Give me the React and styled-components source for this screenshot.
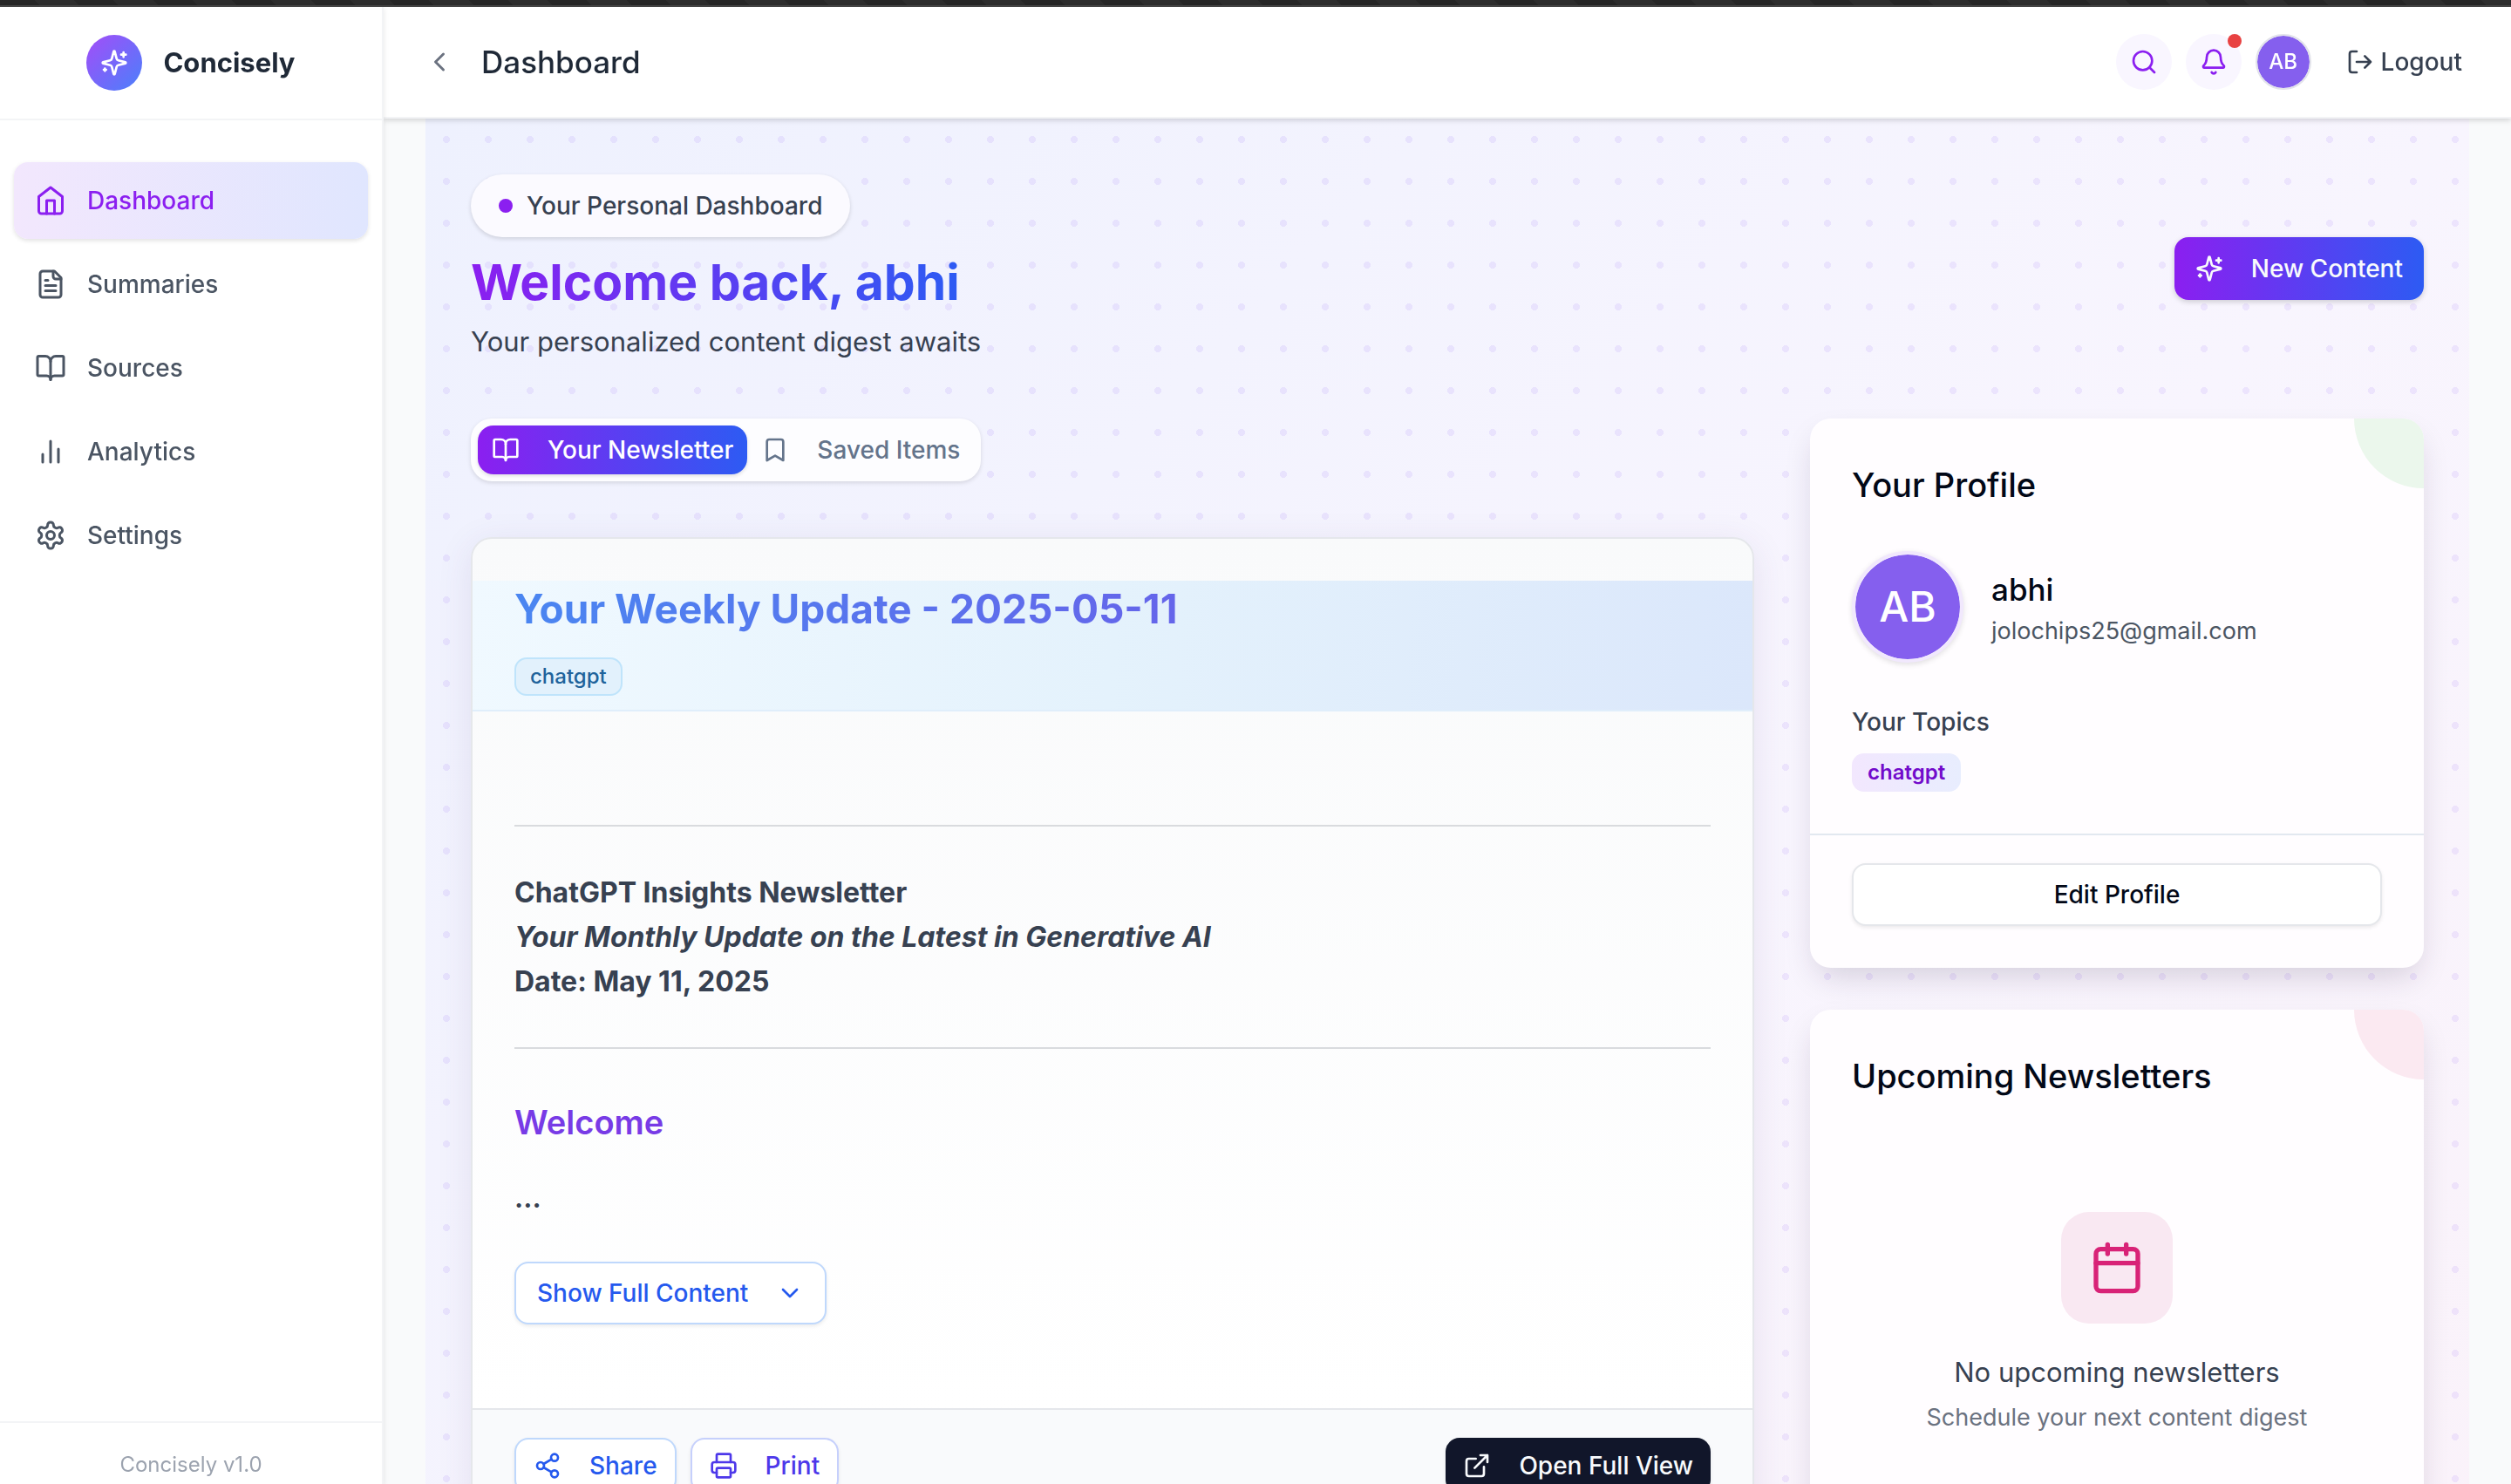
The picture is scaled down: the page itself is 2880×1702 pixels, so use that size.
import React from "react";
import styled, { createGlobalStyle, css } from "styled-components";

const Global = createGlobalStyle`
  *, *::before, *::after { box-sizing: border-box; }
  body { margin: 0; background: #f9fafb; }
  body, button { font-family: Inter, "Liberation Sans", sans-serif; font-size: 28px; line-height: 40px; }
  h1, h2, h3, p, hr, ul { margin: 0; padding: 0; }
  button { cursor: pointer; border: 0; background: none; padding: 0; color: inherit; }
  a { color: inherit; text-decoration: none; }
  svg { display: block; flex: none; }
`;

const PURPLE = "#8b1ff0";
const BLUE = "#2d5bf3";

const Svg = styled.svg.attrs({
  viewBox: "0 0 24 24",
  fill: "none",
  stroke: "currentColor",
  strokeWidth: 2,
  strokeLinecap: "round",
  strokeLinejoin: "round",
  "aria-hidden": true,
})`
  width: ${(p) => p.$size || 32}px;
  height: ${(p) => p.$size || 32}px;
`;

const SHAPES = {
  sparkles: (
    <>
      <path d="M9.937 15.5A2 2 0 0 0 8.5 14.063l-6.135-1.582a.5.5 0 0 1 0-.962L8.5 9.936A2 2 0 0 0 9.937 8.5l1.582-6.135a.5.5 0 0 1 .963 0L14.063 8.5A2 2 0 0 0 15.5 9.937l6.135 1.581a.5.5 0 0 1 0 .964L15.5 14.063a2 2 0 0 0-1.437 1.437l-1.582 6.135a.5.5 0 0 1-.963 0z" />
      <path d="M20 3v4M22 5h-4M4 17v2M5 18H3" />
    </>
  ),
  home: (
    <>
      <path d="m3 9 9-7 9 7v11a2 2 0 0 1-2 2H5a2 2 0 0 1-2-2z" />
      <path d="M9 22V12h6v10" />
    </>
  ),
  file: (
    <>
      <path d="M15 2H6a2 2 0 0 0-2 2v16a2 2 0 0 0 2 2h12a2 2 0 0 0 2-2V7Z" />
      <path d="M14 2v4a2 2 0 0 0 2 2h4M10 9H8M16 13H8M16 17H8" />
    </>
  ),
  book: (
    <>
      <path d="M12 7v14" />
      <path d="M3 18a1 1 0 0 1-1-1V4a1 1 0 0 1 1-1h5a4 4 0 0 1 4 4 4 4 0 0 1 4-4h5a1 1 0 0 1 1 1v13a1 1 0 0 1-1 1h-6a3 3 0 0 0-3 3 3 3 0 0 0-3-3z" />
    </>
  ),
  bars: <path d="M18 20V10M12 20V4M6 20v-6" />,
  settings: (
    <>
      <path d="M12.22 2h-.44a2 2 0 0 0-2 2v.18a2 2 0 0 1-1 1.73l-.43.25a2 2 0 0 1-2 0l-.15-.08a2 2 0 0 0-2.73.73l-.22.38a2 2 0 0 0 .73 2.73l.15.1a2 2 0 0 1 1 1.72v.51a2 2 0 0 1-1 1.74l-.15.09a2 2 0 0 0-.73 2.73l.22.38a2 2 0 0 0 2.73.73l.15-.08a2 2 0 0 1 2 0l.43.25a2 2 0 0 1 1 1.73V20a2 2 0 0 0 2 2h.44a2 2 0 0 0 2-2v-.18a2 2 0 0 1 1-1.73l.43-.25a2 2 0 0 1 2 0l.15.08a2 2 0 0 0 2.73-.73l.22-.39a2 2 0 0 0-.73-2.73l-.15-.08a2 2 0 0 1-1-1.74v-.5a2 2 0 0 1 1-1.74l.15-.09a2 2 0 0 0 .73-2.73l-.22-.38a2 2 0 0 0-2.73-.73l-.15.08a2 2 0 0 1-2 0l-.43-.25a2 2 0 0 1-1-1.73V4a2 2 0 0 0-2-2z" />
      <circle cx="12" cy="12" r="3" />
    </>
  ),
  back: <path d="m15 18-6-6 6-6" />,
  down: <path d="m6 9 6 6 6-6" />,
  search: (
    <>
      <circle cx="11" cy="11" r="8" />
      <path d="m21 21-4.3-4.3" />
    </>
  ),
  bell: (
    <>
      <path d="M10.268 21a2 2 0 0 0 3.464 0" />
      <path d="M3.262 15.326A1 1 0 0 0 4 17h16a1 1 0 0 0 .74-1.673C19.41 13.956 18 12.499 18 8A6 6 0 0 0 6 8c0 4.499-1.411 5.956-2.738 7.326" />
    </>
  ),
  logout: (
    <>
      <path d="M9 21H5a2 2 0 0 1-2-2V5a2 2 0 0 1 2-2h4" />
      <path d="m16 17 5-5-5-5M21 12H9" />
    </>
  ),
  bookmark: <path d="m19 21-7-4-7 4V5a2 2 0 0 1 2-2h10a2 2 0 0 1 2 2v16z" />,
  share: (
    <>
      <circle cx="18" cy="5" r="3" />
      <circle cx="6" cy="12" r="3" />
      <circle cx="18" cy="19" r="3" />
      <path d="m8.59 13.51 6.83 3.98M15.41 6.51l-6.82 3.98" />
    </>
  ),
  printer: (
    <>
      <path d="M6 18H4a2 2 0 0 1-2-2v-5a2 2 0 0 1 2-2h16a2 2 0 0 1 2 2v5a2 2 0 0 1-2 2h-2" />
      <path d="M6 9V3a1 1 0 0 1 1-1h10a1 1 0 0 1 1 1v6" />
      <rect x="6" y="14" width="12" height="8" rx="1" />
    </>
  ),
  external: (
    <>
      <path d="M15 3h6v6M10 14 21 3" />
      <path d="M18 13v6a2 2 0 0 1-2 2H5a2 2 0 0 1-2-2V8a2 2 0 0 1 2-2h6" />
    </>
  ),
  calendar: (
    <>
      <path d="M8 2v4M16 2v4M3 10h18" />
      <rect x="3" y="4" width="18" height="18" rx="2" />
    </>
  ),
};

const Icon = ({ name, size }) => <Svg $size={size}>{SHAPES[name]}</Svg>;

/* ---------- frame ---------- */

const Screen = styled.div`
  display: flex;
  flex-direction: column;
  height: 100vh;
  overflow: hidden;
`;

const Strip = styled.div`
  flex: none;
  height: 8px;
  border-bottom: 2px solid #464646;
  background: repeating-linear-gradient(45deg, #262626 0 32px, #2d2d2d 32px 64px);
`;

const Shell = styled.div`
  flex: 1;
  min-height: 0;
  display: grid;
  grid-template-columns: 440px minmax(0, 1fr);
`;

const Sidebar = styled.aside`
  position: relative;
  z-index: 3;
  display: flex;
  flex-direction: column;
  min-height: 0;
  background: #fff;
  border-right: 2px solid #f3f4f6;
  box-shadow: 0 2px 6px rgba(0, 0, 0, 0.1);
`;

const Brand = styled.div`
  display: flex;
  align-items: center;
  justify-content: center;
  gap: 24px;
  height: 130px;
  border-bottom: 2px solid #f3f4f6;
  font-size: 31px;
  font-weight: 700;
  color: #1f2937;
`;

const BrandMark = styled.span`
  display: grid;
  place-items: center;
  width: 64px;
  height: 64px;
  border-radius: 50%;
  color: #fff;
  background: linear-gradient(135deg, #a44df8, #4a80fb);
`;

const Nav = styled.nav`
  flex: 1;
  display: flex;
  flex-direction: column;
  gap: 8px;
  padding: 48px 16px;
`;

const NavLink = styled.a`
  display: flex;
  align-items: center;
  gap: 24px;
  height: 88px;
  padding: 0 24px;
  border-radius: 16px;
  font-weight: 500;
  color: #4b5563;
  ${(p) =>
    p.$active &&
    css`
      color: ${PURPLE};
      background: linear-gradient(90deg, #f2e7fd, #e0e6fe);
      box-shadow: 0 2px 5px rgba(0, 0, 0, 0.12);
    `}
`;

const Version = styled.footer`
  padding: 32px 32px 6px;
  border-top: 2px solid #f3f4f6;
  font-size: 24px;
  line-height: 32px;
  text-align: center;
  color: #9ca3af;
`;

const Main = styled.div`
  display: flex;
  flex-direction: column;
  min-width: 0;
  min-height: 0;
`;

const TopBar = styled.header`
  position: relative;
  z-index: 2;
  flex: none;
  display: flex;
  align-items: center;
  gap: 30px;
  height: 128px;
  padding: 0 32px 0 46px;
  background: #fff;
  border-bottom: 2px solid #f3f4f6;
  box-shadow: 0 2px 6px rgba(0, 0, 0, 0.16);
`;

const BackButton = styled.button`
  color: #6b7280;
`;

const PageTitle = styled.h1`
  flex: 1;
  font-size: 35px;
  font-weight: 500;
  color: #1f2937;
`;

const TopActions = styled.div`
  display: flex;
  align-items: center;
  gap: 16px;
`;

const RoundButton = styled.button`
  position: relative;
  display: grid;
  place-items: center;
  width: 64px;
  height: 64px;
  border-radius: 50%;
  color: ${PURPLE};
  background: #f9f6ff;
`;

const Alert = styled.span`
  position: absolute;
  top: 0;
  right: 0;
  width: 16px;
  height: 16px;
  border-radius: 50%;
  background: #e84242;
`;

const Avatar = styled.span`
  flex: none;
  display: grid;
  place-items: center;
  width: ${(p) => (p.$large ? 128 : 64)}px;
  height: ${(p) => (p.$large ? 128 : 64)}px;
  border: ${(p) => (p.$large ? "4px solid #f1e8fd" : "2px solid #e2e3ea")};
  border-radius: 50%;
  font-size: ${(p) => (p.$large ? 48 : 24)}px;
  font-weight: 500;
  color: #fff;
  background: #855fee;
  background-clip: padding-box;
  box-shadow: ${(p) => (p.$large ? "0 2px 6px rgba(0, 0, 0, 0.12)" : "none")};
`;

const LogoutButton = styled.button`
  display: flex;
  align-items: center;
  gap: 8px;
  height: 64px;
  padding: 0 24px;
  font-weight: 500;
  color: #374151;
`;

/* ---------- page ---------- */

const Scroller = styled.main`
  flex: 1;
  min-height: 0;
  overflow-y: auto;
  scrollbar-width: none;
  padding: 0 48px;
  background: #f9fafb;
`;

const Canvas = styled.div`
  min-height: 2400px;
  padding: 64px 52px;
  background:
    radial-gradient(circle, rgba(139, 92, 246, 0.11) 4px, transparent 4px) 0 0 / 48px 48px,
    linear-gradient(to bottom right, #eef1fe, #f8f5fe 50%, #fbf1f8);
`;

const Hero = styled.section`
  display: flex;
  align-items: center;
  justify-content: space-between;
  margin-bottom: 64px;
`;

const Pill = styled.div`
  display: flex;
  align-items: center;
  gap: 16px;
  width: fit-content;
  height: 72px;
  padding: 0 32px;
  border-radius: 36px;
  font-weight: 500;
  color: #374151;
  background: #fbfaff;
  box-shadow: 0 2px 5px rgba(0, 0, 0, 0.14);
`;

const PillDot = styled.span`
  width: 16px;
  height: 16px;
  border-radius: 50%;
  background: ${PURPLE};
`;

const gradientText = css`
  width: fit-content;
  color: transparent;
  background-clip: text;
  -webkit-background-clip: text;
`;

const Welcome = styled.h2`
  margin: 16px 0 8px;
  font-size: 57px;
  line-height: 72px;
  font-weight: 700;
  background-image: linear-gradient(90deg, ${PURPLE}, ${BLUE});
  ${gradientText}
`;

const Lead = styled.p`
  font-size: 31px;
  line-height: 48px;
  color: #374151;
`;

const Button = styled.button`
  display: inline-flex;
  align-items: center;
  justify-content: center;
  gap: 32px;
  height: ${(p) => (p.$small ? 64 : 72)}px;
  width: ${(p) => (p.$wide ? "100%" : "auto")};
  padding: 0 ${(p) => (p.$small ? 20 : 24)}px;
  border-radius: 16px;
  font-weight: 500;
  box-shadow: 0 2px 4px rgba(0, 0, 0, 0.08);
`;

const PrimaryButton = styled(Button)`
  color: #f8fafc;
  background: linear-gradient(90deg, ${PURPLE}, ${BLUE});
  box-shadow: 0 2px 6px rgba(0, 0, 0, 0.18);
`;

const OutlineButton = styled(Button)`
  color: ${(p) => p.$ink};
  border: 2px solid ${(p) => p.$line};
  background: #fff;
`;

const DarkButton = styled(Button)`
  color: #f8fafc;
  background: #11162a;
`;

const Columns = styled.div`
  display: grid;
  grid-template-columns: repeat(3, minmax(0, 1fr));
  gap: 64px;
  align-items: start;
`;

const Feed = styled.section`
  grid-column: span 2;
  display: flex;
  flex-direction: column;
  align-items: flex-start;
  gap: 64px;
`;

const Tabs = styled.div`
  display: flex;
  padding: 8px;
  border-radius: 24px;
  background: #fdfdff;
  box-shadow: 0 2px 5px rgba(0, 0, 0, 0.12);
`;

const Tab = styled.button`
  display: flex;
  align-items: center;
  gap: 32px;
  height: 56px;
  padding: 0 16px;
  border-radius: 18px;
  font-weight: 500;
  color: #64748b;
  &[aria-selected="true"] {
    color: #fff;
    background: linear-gradient(90deg, ${PURPLE}, ${BLUE});
    box-shadow: 0 2px 4px rgba(0, 0, 0, 0.12);
  }
`;

const Article = styled.article`
  width: 100%;
  overflow: hidden;
  padding-top: 48px;
  border: 2px solid #e5e7eb;
  border-radius: 24px;
  background: linear-gradient(#f9fafb, #ffffff 1000px);
  box-shadow: 0 8px 40px rgba(80, 50, 120, 0.1);
`;

const ArticleHead = styled.header`
  padding: 0 48px 16px;
  border-bottom: 2px solid #e0eefb;
  background: linear-gradient(96deg, #f0f9ff, #e4f2fc 50%, #dbe7fb);
`;

const ArticleTitle = styled.h2`
  margin-bottom: 24px;
  font-size: 46px;
  line-height: 64px;
  font-weight: 700;
  background-image: linear-gradient(90deg, #4a86f1, #6565ea);
  ${gradientText}
`;

const Chip = styled.span`
  display: block;
  width: fit-content;
  padding: 4px 16px;
  border: 2px solid ${(p) => (p.$sky ? "#bfe4fb" : "transparent")};
  border-radius: 14px;
  font-size: 24px;
  line-height: 32px;
  font-weight: ${(p) => (p.$sky ? 500 : 600)};
  color: ${(p) => (p.$sky ? "#20639b" : "#720bcb")};
  background: ${(p) =>
    p.$sky ? "#e2f1fc" : "linear-gradient(90deg, #f2e7fe, #e8edfe) border-box"};
`;

const ArticleBody = styled.div`
  padding: 80px 48px 96px;
  font-size: 32px;
  line-height: 51px;
  color: #374151;
`;

const Rule = styled.hr`
  height: 2px;
  margin: 50px 0;
  border: 0;
  background: #d9dbde;
`;

const Masthead = styled.p`
  font-weight: 700;
`;

const SectionTitle = styled.h3`
  margin: 57px 0 34px;
  font-size: 38px;
  line-height: 54px;
  font-weight: 600;
  color: #783be6;
`;

const Excerpt = styled.p`
  margin-bottom: 48px;
  font-weight: 600;
`;

const ArticleFoot = styled.footer`
  display: flex;
  gap: 16px;
  padding: 32px 48px;
  border-top: 2px solid #e5e7eb;
  background: #f9fafc;
`;

const Spacer = styled.span`
  flex: 1;
`;

const Aside = styled.aside`
  display: flex;
  flex-direction: column;
  gap: 48px;
`;

const Card = styled.section`
  position: relative;
  overflow: hidden;
  border-radius: 24px;
  background: #fffdff;
  box-shadow: 0 16px 36px -8px rgba(40, 20, 60, 0.18);
`;

const Corner = styled.span`
  position: absolute;
  top: 0;
  right: 0;
  width: 80px;
  height: 80px;
  border-bottom-left-radius: 80px;
  background: ${(p) => p.$tint};
`;

const CardTitle = styled.h2`
  padding: 48px;
  font-size: 38px;
  line-height: 56px;
  font-weight: 500;
  color: #020817;
`;

const CardBody = styled.div`
  padding: 0 48px 48px;
`;

const Person = styled.div`
  display: flex;
  align-items: center;
  gap: 32px;
  margin-bottom: 48px;
`;

const PersonName = styled.p`
  font-size: 35px;
  line-height: 56px;
  font-weight: 500;
  color: #020817;
`;

const Email = styled.p`
  font-size: 27px;
  color: #4b5563;
`;

const Label = styled.p`
  margin-bottom: 16px;
  font-weight: 500;
  color: #374151;
`;

const CardFoot = styled.footer`
  padding: 32px 48px 48px;
  border-top: 2px solid #e2e8f0;
`;

const Empty = styled.div`
  display: flex;
  flex-direction: column;
  align-items: center;
  padding: 80px 48px 112px;
`;

const EmptyIcon = styled.span`
  display: grid;
  place-items: center;
  width: 128px;
  height: 128px;
  margin-bottom: 32px;
  border-radius: 32px;
  color: #d82377;
  background: #f9e8f2;
`;

const EmptyTitle = styled.p`
  margin-bottom: 8px;
  font-size: 31px;
  line-height: 48px;
  color: #374151;
`;

const EmptyText = styled.p`
  font-size: 27px;
  color: #6b7280;
`;

const NAV = [
  ["home", "Dashboard"],
  ["file", "Summaries"],
  ["book", "Sources"],
  ["bars", "Analytics"],
  ["settings", "Settings"],
];

export default function App() {
  return (
    <>
      <Global />
      <Screen>
        <Strip />
        <Shell>
          <Sidebar>
            <Brand>
              <BrandMark>
                <Icon name="sparkles" />
              </BrandMark>
              Concisely
            </Brand>
            <Nav>
              {NAV.map(([icon, label], i) => (
                <NavLink key={label} href="#" $active={i === 0}>
                  <Icon name={icon} size={36} />
                  {label}
                </NavLink>
              ))}
            </Nav>
            <Version>Concisely v1.0</Version>
          </Sidebar>
          <Main>
            <TopBar>
              <BackButton aria-label="Back">
                <Icon name="back" size={36} />
              </BackButton>
              <PageTitle>Dashboard</PageTitle>
              <TopActions>
                <RoundButton aria-label="Search">
                  <Icon name="search" />
                </RoundButton>
                <RoundButton aria-label="Notifications">
                  <Icon name="bell" />
                  <Alert />
                </RoundButton>
                <Avatar>AB</Avatar>
                <LogoutButton>
                  <Icon name="logout" />
                  Logout
                </LogoutButton>
              </TopActions>
            </TopBar>
            <Scroller>
              <Canvas>
                <Hero>
                  <div>
                    <Pill>
                      <PillDot />
                      Your Personal Dashboard
                    </Pill>
                    <Welcome>Welcome back, abhi</Welcome>
                    <Lead>Your personalized content digest awaits</Lead>
                  </div>
                  <PrimaryButton>
                    <Icon name="sparkles" />
                    New Content
                  </PrimaryButton>
                </Hero>
                <Columns>
                  <Feed>
                    <Tabs role="tablist">
                      <Tab role="tab" aria-selected="true">
                        <Icon name="book" />
                        Your Newsletter
                      </Tab>
                      <Tab role="tab" aria-selected="false">
                        <Icon name="bookmark" />
                        Saved Items
                      </Tab>
                    </Tabs>
                    <Article>
                      <ArticleHead>
                        <ArticleTitle>Your Weekly Update - 2025-05-11</ArticleTitle>
                        <Chip $sky>chatgpt</Chip>
                      </ArticleHead>
                      <ArticleBody>
                        <Rule />
                        <Masthead>
                          ChatGPT Insights Newsletter
                          <br />
                          <em>Your Monthly Update on the Latest in Generative AI</em>
                          <br />
                          Date: May 11, 2025
                        </Masthead>
                        <Rule />
                        <SectionTitle>Welcome</SectionTitle>
                        <Excerpt>...</Excerpt>
                        <OutlineButton $ink="#2559ee" $line="#bfd8fc">
                          Show Full Content
                          <Icon name="down" />
                        </OutlineButton>
                      </ArticleBody>
                      <ArticleFoot>
                        <OutlineButton $small $ink="#2559ee" $line="#bfd8fc">
                          <Icon name="share" />
                          Share
                        </OutlineButton>
                        <OutlineButton $small $ink="#4d38ea" $line="#c6d0fc">
                          <Icon name="printer" />
                          Print
                        </OutlineButton>
                        <Spacer />
                        <DarkButton $small>
                          <Icon name="external" />
                          Open Full View
                        </DarkButton>
                      </ArticleFoot>
                    </Article>
                  </Feed>
                  <Aside>
                    <Card>
                      <Corner $tint="#ebf7ec" />
                      <CardTitle>Your Profile</CardTitle>
                      <CardBody>
                        <Person>
                          <Avatar $large>AB</Avatar>
                          <div>
                            <PersonName>abhi</PersonName>
                            <Email>jolochips25@gmail.com</Email>
                          </div>
                        </Person>
                        <Label>Your Topics</Label>
                        <Chip>chatgpt</Chip>
                      </CardBody>
                      <CardFoot>
                        <OutlineButton $wide $ink="#020817" $line="#e5e7eb">
                          Edit Profile
                        </OutlineButton>
                      </CardFoot>
                    </Card>
                    <Card>
                      <Corner $tint="#fbe9f1" />
                      <CardTitle>Upcoming Newsletters</CardTitle>
                      <Empty>
                        <EmptyIcon>
                          <Icon name="calendar" size={64} />
                        </EmptyIcon>
                        <EmptyTitle>No upcoming newsletters</EmptyTitle>
                        <EmptyText>Schedule your next content digest</EmptyText>
                      </Empty>
                    </Card>
                  </Aside>
                </Columns>
              </Canvas>
            </Scroller>
          </Main>
        </Shell>
      </Screen>
    </>
  );
}
